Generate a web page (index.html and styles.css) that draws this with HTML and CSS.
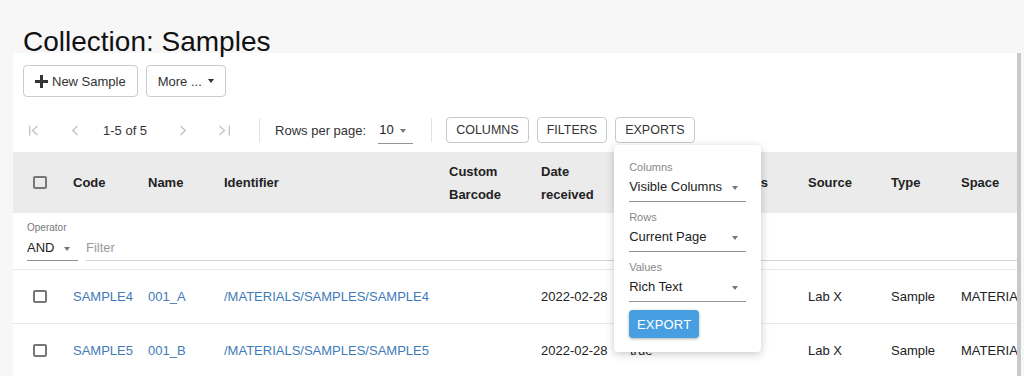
FILE: index.html
```html
<!DOCTYPE html>
<html lang="en">
<head>
    <meta charset="UTF-8">
    <meta name="viewport" content="width=device-width, initial-scale=1.0">
    <title>Collection: Samples</title>
    <link rel="stylesheet" href="styles.css">
</head>
<body>
    <div class="page-head">
        <h1 class="title">Collection: Samples</h1>
    </div>
    <div class="panel">
        <div class="actions">
            <button class="btn">
                <svg class="plus" width="13" height="13" viewBox="0 0 13 13"><path d="M5 0h3v5h5v3H8v5H5V8H0V5h5z" fill="#333"/></svg>
                New Sample
            </button>
            <button class="btn">More ... <span class="caret"></span></button>
        </div>

        <div class="toolbar">
            <svg class="pg-first" width="9" height="11" viewBox="0 0 9 11"><path d="M0.7 0.5v10M8.5 1L3.5 5.5l5 4.5" fill="none" stroke="#c2c2c2" stroke-width="1.3"/></svg>
            <svg class="pg-prev" width="6" height="11" viewBox="0 0 6 11"><path d="M5.5 1L0.8 5.5l4.7 4.5" fill="none" stroke="#c2c2c2" stroke-width="1.3"/></svg>
            <span class="pg-info">1-5 of 5</span>
            <svg class="pg-next" width="6" height="11" viewBox="0 0 6 11"><path d="M0.5 1l4.7 4.5L0.5 10" fill="none" stroke="#c2c2c2" stroke-width="1.3"/></svg>
            <svg class="pg-last" width="11" height="11" viewBox="0 0 11 11"><path d="M0.5 1l5 4.5-5 4.5M10.3 0.5v10" fill="none" stroke="#c2c2c2" stroke-width="1.3"/></svg>
            <span class="sep sep-1"></span>
            <span class="rows-label">Rows per page:</span>
            <div class="select rows-select"><span>10</span><span class="arrow"></span></div>
            <span class="sep sep-2"></span>
            <div class="tool-buttons">
                <button class="tool-btn">Columns</button>
                <button class="tool-btn">Filters</button>
                <div class="export-wrap">
                    <button class="tool-btn">Exports</button>
                    <div class="export-menu">
                        <div class="field">
                            <div class="field-label">Columns</div>
                            <div class="select"><span>Visible Columns</span><span class="arrow"></span></div>
                        </div>
                        <div class="field">
                            <div class="field-label">Rows</div>
                            <div class="select"><span>Current Page</span><span class="arrow"></span></div>
                        </div>
                        <div class="field">
                            <div class="field-label">Values</div>
                            <div class="select"><span>Rich Text</span><span class="arrow"></span></div>
                        </div>
                        <button class="export-btn">Export</button>
                    </div>
                </div>
            </div>
        </div>

        <table class="grid">
            <colgroup>
                <col style="width: 60px">
                <col style="width: 75px">
                <col style="width: 76px">
                <col style="width: 225px">
                <col style="width: 92px">
                <col style="width: 89px">
                <col style="width: 178px">
                <col style="width: 83px">
                <col style="width: 70px">
                <col style="width: 100px">
            </colgroup>
            <thead>
                <tr class="head-row">
                    <th class="chk-cell"><span class="checkbox"></span></th>
                    <th>Code</th>
                    <th>Name</th>
                    <th>Identifier</th>
                    <th>Custom Barcode</th>
                    <th>Date received</th>
                    <th class="th-end">Hazardous Materials</th>
                    <th>Source</th>
                    <th>Type</th>
                    <th>Space</th>
                </tr>
                <tr class="filter-row">
                    <td colspan="10">
                        <div class="filter">
                            <div class="operator">
                                <div class="op-label">Operator</div>
                                <div class="select op-select"><span>AND</span><span class="arrow"></span></div>
                            </div>
                            <div class="filter-input">Filter</div>
                        </div>
                    </td>
                </tr>
            </thead>
            <tbody>
                <tr>
                    <td class="chk-cell"><span class="checkbox"></span></td>
                    <td><a class="link">SAMPLE4</a></td>
                    <td><a class="link">001_A</a></td>
                    <td><a class="link">/MATERIALS/SAMPLES/SAMPLE4</a></td>
                    <td></td>
                    <td>2022-02-28</td>
                    <td>true</td>
                    <td>Lab X</td>
                    <td>Sample</td>
                    <td>MATERIALS</td>
                </tr>
                <tr>
                    <td class="chk-cell"><span class="checkbox"></span></td>
                    <td><a class="link">SAMPLE5</a></td>
                    <td><a class="link">001_B</a></td>
                    <td><a class="link">/MATERIALS/SAMPLES/SAMPLE5</a></td>
                    <td></td>
                    <td>2022-02-28</td>
                    <td>true</td>
                    <td>Lab X</td>
                    <td>Sample</td>
                    <td>MATERIALS</td>
                </tr>
            </tbody>
        </table>
    </div>
</body>
</html>
```

FILE: styles.css
```css
* {
    box-sizing: border-box;
}
body {
    margin: 0;
    height: 376px;
    overflow: hidden;
    background-color: #f7f7f7;
    font-family: "Liberation Sans", Arial, sans-serif;
    font-size: 13px;
    color: #222;
}
.page-head {
    height: 53px;
    padding: 28px 0 0 23px;
}
.title {
    margin: 0;
    font-size: 28px;
    line-height: 28px;
    font-weight: normal;
    color: #111;
}
.panel {
    margin-left: 13px;
    width: 1008px;
    height: 323px;
    background-color: #fff;
    border-right: 4px solid #c9c9c9;
    overflow: hidden;
}
.actions {
    display: flex;
    gap: 8px;
    padding: 12px 10px 0;
}
.btn {
    display: flex;
    align-items: center;
    height: 32px;
    padding: 0 11px;
    border: 1px solid #ccc;
    border-radius: 4px;
    background-color: #fff;
    font-family: inherit;
    font-size: 13px;
    color: #333;
}
.plus {
    margin-right: 4px;
}
.caret {
    display: inline-block;
    margin-left: 6px;
    border-top: 4px solid #333;
    border-left: 3.5px solid transparent;
    border-right: 3.5px solid transparent;
}

/* pagination + tools */
.toolbar {
    display: flex;
    align-items: center;
    height: 26px;
    margin-top: 20px;
    color: #333;
}
.pg-first { margin-left: 16px; }
.pg-prev { margin-left: 34px; }
.pg-info { margin-left: 25px; }
.pg-next { margin-left: 33px; }
.pg-last { margin-left: 33px; }
.sep {
    width: 1px;
    height: 24px;
    background-color: #e2e2e2;
}
.sep-1 { margin-left: 29px; }
.sep-2 { margin-left: 18px; }
.rows-label { margin-left: 15px; }
.select {
    display: flex;
    align-items: center;
    justify-content: space-between;
    line-height: 20px;
    border-bottom: 1px solid #949494;
    color: #222;
}
.arrow {
    display: inline-block;
    margin-top: 2px;
    margin-right: 8px;
    border-top: 4px solid #777;
    border-left: 3.5px solid transparent;
    border-right: 3.5px solid transparent;
}
.rows-select {
    width: 35px;
    margin-left: 12px;
    padding: 4px 0 3px 1px;
    gap: 6px;
}
.rows-select .arrow {
    margin-right: 7px;
}
.tool-buttons {
    display: flex;
    gap: 8px;
    margin-left: 14px;
}
.tool-btn {
    height: 26px;
    padding: 0 9px;
    border: 1px solid #c8c8c8;
    border-radius: 4px;
    background-color: #fff;
    font-family: inherit;
    font-size: 12.5px;
    text-transform: uppercase;
    color: #333;
}
.export-wrap {
    position: relative;
}
.export-menu {
    position: absolute;
    top: 28px;
    left: -1px;
    z-index: 10;
    width: 147px;
    padding: 15px 15px 14px;
    background-color: #fff;
    border-radius: 4px;
    box-shadow: 0 2px 9px rgba(0, 0, 0, 0.22);
}
.field {
    margin-bottom: 8px;
}
.field-label {
    font-size: 11px;
    line-height: 14px;
    color: #888;
}
.field .select {
    padding: 2px 0 4px;
    margin-top: 1px;
}
.export-btn {
    width: 70px;
    height: 28px;
    border: none;
    border-radius: 4px;
    background-color: #479fe2;
    box-shadow: 0 1px 3px rgba(0, 0, 0, 0.3);
    font-family: inherit;
    font-size: 13px;
    text-transform: uppercase;
    letter-spacing: 0.2px;
    color: #fff;
}

/* table */
.grid {
    margin-top: 9px;
    width: 1048px;
    table-layout: fixed;
    border-collapse: separate;
    border-spacing: 0;
}
.grid th,
.grid td {
    padding: 0 16px 0 0;
    text-align: left;
    vertical-align: middle;
    white-space: normal;
}
.grid th {
    height: 61px;
    background-color: #ebebeb;
    font-weight: bold;
    line-height: 23px;
    color: #222;
}
.grid th.th-end {
    padding-right: 40px;
    text-align: right;
    white-space: nowrap;
}
.grid tbody td {
    height: 54px;
    border-bottom: 1px solid #e8e8e8;
    color: #222;
}
.grid .chk-cell {
    padding-left: 20px;
}
.checkbox {
    display: block;
    width: 14px;
    height: 13px;
    border: 2px solid #777;
    border-radius: 2px;
}
.link {
    color: #3f7bb9;
}
.filter-row td {
    padding: 9px 0 8px 14px;
    border-bottom: 1px solid #e8e8e8;
}
.filter {
    display: flex;
    align-items: flex-end;
    gap: 8px;
}
.operator {
    width: 51px;
}
.op-label {
    font-size: 10px;
    line-height: 12px;
    color: #777;
}
.op-select {
    margin-top: 4px;
    padding-bottom: 2px;
}
.filter-input {
    flex: 1;
    line-height: 20px;
    padding-bottom: 2px;
    border-bottom: 1px solid #d4d4d4;
    color: #9a9a9a;
}
```
